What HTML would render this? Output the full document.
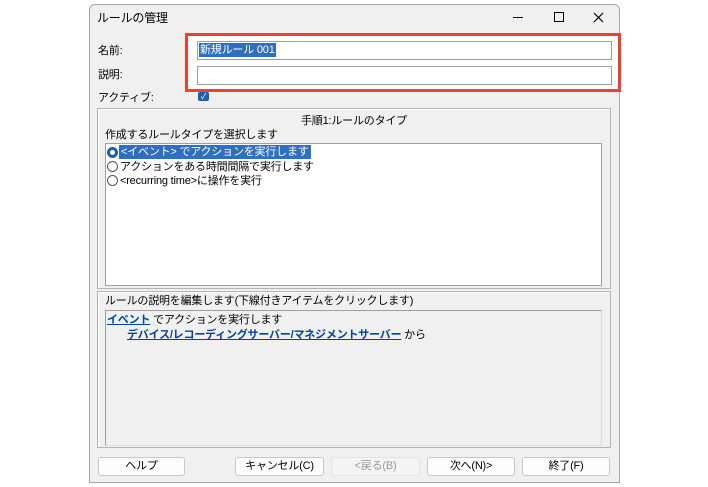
<!DOCTYPE html>
<html><head><meta charset="utf-8"><style>
*{box-sizing:border-box;margin:0;padding:0}
body{width:708px;height:487px;background:#fff;position:relative;overflow:hidden;font-family:"Liberation Sans","Noto Sans CJK JP",sans-serif;font-size:11px;color:#000;letter-spacing:-0.2px}
.a{position:absolute}
.win{left:89px;top:4px;width:531px;height:479px;background:#f0f0f0;border:1px solid #a8a8a8;border-radius:6px 6px 0 0}
.box{background:#fff;border:1px solid #a0a0a0}
.grp{border:1px solid #b4b4b4;box-shadow:inset 1px 1px 0 #fff}
.btn{background:#fdfdfd;border:1px solid #c8c8c8;border-radius:3px;text-align:center;line-height:17px;height:19px}
.rad{width:11px;height:11px;border:1px solid #555;border-radius:50%;background:#fff}
a{color:#0044aa;text-decoration:underline;font-weight:bold}
</style></head><body>
<div class="a win"></div>
<div class="a" style="left:97px;top:9px;font-size:12px">ルールの管理</div>
<div class="a" style="left:513px;top:17px;width:10px;height:1px;background:#000"></div>
<div class="a" style="left:554px;top:12px;width:10px;height:10px;border:1px solid #000"></div>
<svg class="a" style="left:593px;top:12px" width="11" height="11"><path d="M1 1L10 10M10 1L1 10" stroke="#000" stroke-width="1.2"/></svg>
<div class="a" style="left:185px;top:33px;width:436px;height:59px;border:3px solid #f04030;background:#fff"></div>
<div class="a" style="left:98px;top:42px">名前:</div>
<div class="a" style="left:98px;top:66px">説明:</div>
<div class="a" style="left:98px;top:89px">アクティブ:</div>
<div class="a box" style="left:197px;top:41px;width:415px;height:19px"></div>
<div class="a" style="left:199px;top:43px;background:#2f6fbf;color:#fff;padding:0 1px;line-height:14px">新規ルール 001</div>
<div class="a box" style="left:197px;top:66px;width:415px;height:19px"></div>
<div class="a" style="left:198px;top:92px;width:11px;height:9px;background:#1d5fae;border-radius:2px;color:#fff;font-size:8px;line-height:9px;text-align:center">✓</div>
<div class="a grp" style="left:97px;top:108px;width:514px;height:181px"></div>
<div class="a" style="left:97px;top:112px;width:514px;text-align:center">手順1:ルールのタイプ</div>
<div class="a" style="left:105px;top:126px">作成するルールタイプを選択します</div>
<div class="a box" style="left:105px;top:143px;width:497px;height:143px"></div>
<div class="a rad" style="left:107px;top:147px;border-color:#1d5fae;border-width:3px"></div>
<div class="a" style="left:119px;top:145px;background:#2f6fbf;color:#fff;padding:0 2px;line-height:14px">&lt;イベント&gt; でアクションを実行します</div>
<div class="a rad" style="left:107px;top:161px"></div>
<div class="a" style="left:120px;top:158px">アクションをある時間間隔で実行します</div>
<div class="a rad" style="left:107px;top:175px"></div>
<div class="a" style="left:120px;top:172px">&lt;recurring time&gt;に操作を実行</div>
<div class="a grp" style="left:97px;top:291px;width:514px;height:157px"></div>
<div class="a" style="left:105px;top:292px">ルールの説明を編集します(下線付きアイテムをクリックします)</div>
<div class="a" style="left:105px;top:310px;width:497px;height:136px;border:1px solid #a0a0a0;border-right-color:#ddd;border-bottom-color:#ddd;background:#f0f0f0"></div>
<div class="a" style="left:107px;top:311px"><a>イベント</a> でアクションを実行します</div>
<div class="a" style="left:127px;top:326px"><a>デバイス/レコーディングサーバー/マネジメントサーバー</a> から</div>
<div class="a btn" style="left:98px;top:457px;width:87px">ヘルプ</div>
<div class="a btn" style="left:235px;top:457px;width:89px">キャンセル(C)</div>
<div class="a btn" style="left:331px;top:457px;width:89px;background:#f4f4f4;border-color:#e4e4e4;color:#999">&lt;戻る(B)</div>
<div class="a btn" style="left:427px;top:457px;width:88px">次へ(N)&gt;</div>
<div class="a btn" style="left:522px;top:457px;width:88px">終了(F)</div>
</body></html>
